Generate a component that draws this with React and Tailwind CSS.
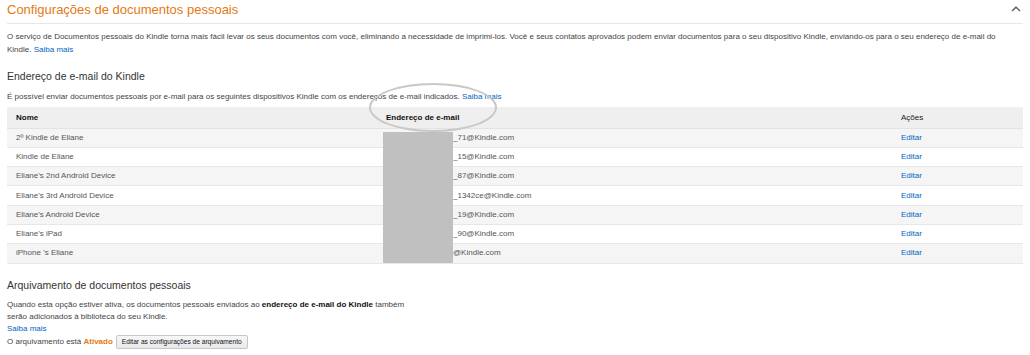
import React from "react";

const devices = [
  { name: "2º Kindle de Eliane", email: "_71@Kindle.com" },
  { name: "Kindle de Eliane", email: "_15@Kindle.com" },
  { name: "Eliane's 2nd Android Device", email: "_87@Kindle.com" },
  { name: "Eliane's 3rd Android Device", email: "_1342ce@Kindle.com" },
  { name: "Eliane's Android Device", email: "_19@Kindle.com" },
  { name: "Eliane's iPad", email: "_90@Kindle.com" },
  { name: "iPhone 's Eliane", email: "@Kindle.com" },
];

const App = () => {
  return (
    <div className="w-[1030px] h-[355px] overflow-hidden bg-white px-[7px] font-['Liberation_Sans',Arial,sans-serif] text-[#333]">
      {/* Header */}
      <div className="flex items-center justify-between h-[20px] mb-[3px]">
        <h1 className="text-[13px] leading-[20px] text-[#e47911]">
          Configurações de documentos pessoais
        </h1>
        <svg width="10" height="6" viewBox="0 0 10 6" className="mr-[2px] mt-[-2px]">
          <polyline points="1,5 5,1.2 9,5" fill="none" stroke="#555" strokeWidth="1.3" />
        </svg>
      </div>
      <div className="border-t border-[#e7e7e7]" />

      <p className="mt-[7px] w-[1000px] text-[8px] leading-[12.5px] text-[#444]">
        O serviço de Documentos pessoais do Kindle torna mais fácil levar os seus documentos com você, eliminando a necessidade de imprimi-los. Você e seus contatos aprovados podem enviar documentos para o seu dispositivo Kindle, enviando-os para o seu endereço de e-mail do Kindle.{" "}
        <a className="text-[#0066c0]">Saiba mais</a>
      </p>

      {/* Kindle email section */}
      <h2 className="mt-[12.5px] text-[10.5px] leading-[14px] text-[#333]">
        Endereço de e-mail do Kindle
      </h2>
      <p className="mt-[8.5px] text-[8px] leading-[12.5px] text-[#444]">
        É possível enviar documentos pessoais por e-mail para os seguintes dispositivos Kindle com os endereços de e-mail indicados.{" "}
        <a className="text-[#0066c0]">Saiba mais</a>
      </p>

      <div className="relative mt-[3px] w-[1016px] text-[8px]">
        <div className="grid grid-cols-[370px_515px_1fr] h-[22px] items-center bg-[#efefef] font-bold text-[#111] border-b border-[#e3e3e3]">
          <div className="pl-[9px] pt-[1px]">Nome</div>
          <div className="pl-[9px] pt-[1px]">Endereço de e-mail</div>
          <div className="pl-[9px] pt-[1px] font-normal text-[#222]">Ações</div>
        </div>
        {devices.map((d, i) => (
          <div
            key={d.name}
            className={`grid grid-cols-[370px_515px_1fr] h-[19.3px] items-center border-b border-[#e7e7e7] ${
              i % 2 === 0 ? "bg-[#f5f5f5]" : "bg-white"
            }`}
          >
            <div className="pl-[9px] text-[#555]">{d.name}</div>
            <div className="pl-[76px] text-[#555]">{d.email}</div>
            <div className="pl-[9px] text-[#0066c0]">Editar</div>
          </div>
        ))}

        {/* redaction + highlight */}
        <div className="absolute left-[376px] top-[25px] w-[70px] h-[131px] bg-[#c0c0c0]" />
        <div className="absolute left-[362px] top-[-24px] w-[128px] h-[49px] rounded-[50%] border-2 border-[#c8c8c8]" />
      </div>

      {/* Archive section */}
      <h2 className="mt-[14px] text-[10.5px] leading-[14px] text-[#333]">
        Arquivamento de documentos pessoais
      </h2>
      <div className="mt-[7px] w-[415px] text-[8px] leading-[12px] text-[#444]">
        <p>
          Quando esta opção estiver ativa, os documentos pessoais enviados ao{" "}
          <b className="text-[#111]">endereço de e-mail do Kindle</b> também serão adicionados à biblioteca do seu Kindle.
        </p>
        <a className="block text-[#0066c0]">Saiba mais</a>
        <div className="flex items-center h-[14px] gap-[3px]">
          <span>
            O arquivamento está <span className="font-bold text-[#e47911]">Ativado</span>
          </span>
          <button className="h-[14px] px-[5px] rounded-[2px] border border-[#c6c6c6] bg-gradient-to-b from-[#f7f7f7] to-[#e7e9ec] text-[6.6px] text-[#111]">
            Editar as configurações de arquivamento
          </button>
        </div>
      </div>
    </div>
  );
};

export default App;
